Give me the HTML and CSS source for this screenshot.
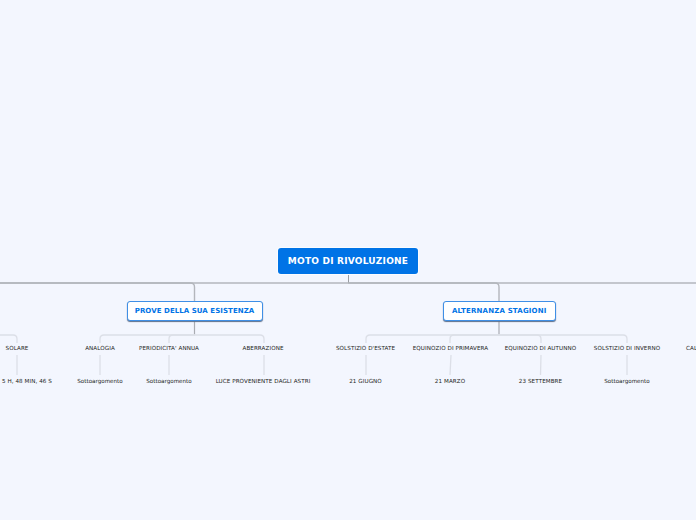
FILE: index.html
```html
<!DOCTYPE html>
<html lang="it">
<head>
<meta charset="utf-8">
<title>MOTO DI RIVOLUZIONE</title>
<link rel="stylesheet" href="styles.css">
</head>
<body>
<main class="canvas">
  <svg class="links" width="696" height="520" viewBox="0 0 696 520" fill="none">
    <g class="l-main">
      <path d="M0 283H696"/>
      <path d="M348.5 274V283"/>
      <path d="M0 283H190.500Q194.500 283 194.500 287V301"/>
      <path d="M348 283H495Q499 283 499 287V301"/>
    </g>
    <g class="l-sub">
      <path d="M194.500 321V335"/>
      <path d="M499 321V335"/>
    </g>
    <g class="l-child">
      <path d="M0 335H13Q17 335 17 339V343"/>
      <path d="M195 335H104Q100 335 100 339V343"/>
      <path d="M195 335H173Q169 335 169 339V343"/>
      <path d="M195 335H260Q264 335 264 339V343"/>
      <path d="M499 335H370Q366 335 366 339V343"/>
      <path d="M499 335H454Q450 335 450 339V343"/>
      <path d="M499 335H537Q541 335 541 339V343"/>
      <path d="M499 335H623Q627 335 627 339V343"/>
      <path d="M17 355V375"/>
      <path d="M100 355V375"/>
      <path d="M169 355V375"/>
      <path d="M264 355V375"/>
      <path d="M366 355V375"/>
      <path d="M451 355L450 375"/>
      <path d="M541 355L540.500 375"/>
      <path d="M627 355V375"/>
    </g>
  </svg>

  <div class="node root">MOTO DI RIVOLUZIONE</div>
  <div class="node main prove">PROVE DELLA SUA ESISTENZA</div>
  <div class="node main alt">ALTERNANZA STAGIONI</div>

  <div class="leaf caps r1 c1">SOLARE</div>
  <div class="leaf caps r1 c2">ANALOGIA</div>
  <div class="leaf caps r1 c3">PERIODICITA' ANNUA</div>
  <div class="leaf caps r1 c4">ABERRAZIONE</div>
  <div class="leaf caps r1 c5">SOLSTIZIO D'ESTATE</div>
  <div class="leaf caps r1 c6">EQUINOZIO DI PRIMAVERA</div>
  <div class="leaf caps r1 c7">EQUINOZIO DI AUTUNNO</div>
  <div class="leaf caps r1 c8">SOLSTIZIO DI INVERNO</div>
  <div class="leaf caps r1 c9">CALENDARIO</div>

  <div class="leaf caps r2 c1b">5 H, 48 MIN, 46 S</div>
  <div class="leaf r2 c2">Sottoargomento</div>
  <div class="leaf r2 c3">Sottoargomento</div>
  <div class="leaf caps r2 c4">LUCE PROVENIENTE DAGLI ASTRI</div>
  <div class="leaf caps r2 c5">21 GIUGNO</div>
  <div class="leaf caps r2 c6b">21 MARZO</div>
  <div class="leaf caps r2 c7">23 SETTEMBRE</div>
  <div class="leaf r2 c8">Sottoargomento</div>
</main>
</body>
</html>
```
FILE: styles.css
```css
html, body {
  margin: 0;
  padding: 0;
  height: 100%;
  overflow: hidden;
  background: #f3f6fe;
}

.canvas {
  position: relative;
  width: 696px;
  height: 520px;
  overflow: hidden;
  font-family: "DejaVu Sans", Verdana, sans-serif;
}

.links {
  position: absolute;
  left: 0;
  top: 0;
}

.l-main path { stroke: #b3b6bc; stroke-width: 1.4; }
.l-main path:nth-child(2) { stroke: #9a9da3; stroke-width: 1; }
.l-sub path { stroke: #a9acb2; stroke-width: 1.2; }
.l-child path { stroke: #dcdfe7; stroke-width: 1.3; }

.node {
  position: absolute;
  box-sizing: border-box;
  display: flex;
  align-items: center;
  justify-content: center;
  font-weight: 700;
  white-space: nowrap;
}

.root {
  left: 278px;
  top: 248px;
  width: 140px;
  height: 26px;
  border-radius: 3px;
  background: #0073e6;
  color: #fff;
  font-size: 9px;
  letter-spacing: 0.22px;
  box-shadow: 0 0 0 1px #fafcff;
}

.main {
  top: 300.500px;
  height: 20.500px;
  border: 1.5px solid #3f8fe6;
  border-radius: 3px;
  background: #fff;
  color: #0073e6;
  font-size: 7px;
  letter-spacing: 0.06px;
  box-shadow: 0 1px 1px #5b6f8c;
}

.prove { left: 126.500px; width: 136px; }
.alt { left: 443px; width: 112.500px; letter-spacing: 0.18px; }

.leaf {
  position: absolute;
  transform: translateX(-50%);
  font-size: 5.600px;
  line-height: 8px;
  color: #1c1e22;
  white-space: nowrap;
}

.caps { letter-spacing: 0.08px; }

.r1 { top: 344px; }
.r2 { top: 377px; }

.c1 { left: 17px; }
.c1b { left: 27px; }
.c2 { left: 100px; }
.c3 { left: 169px; }
.c4 { left: 263px; }
.c5 { left: 365.500px; }
.c6 { left: 450.500px; }
.c6b { left: 450px; }
.c7 { left: 540.500px; }
.c8 { left: 627px; }
.c9 { left: 686px; transform: none; }
```
